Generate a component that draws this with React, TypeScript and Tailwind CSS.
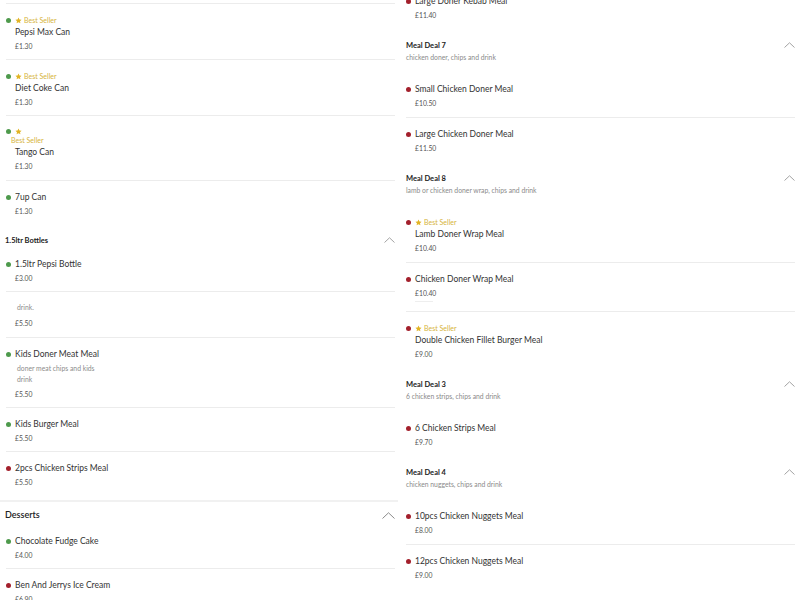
import type { ReactNode } from 'react';

type Dot = 'green' | 'red';

interface Item {
  name?: string;
  price: string;
  dot: Dot;
  best?: 'inline' | 'wrapped';
  desc?: string[];
  last?: boolean;
  stub?: boolean;
}

const font = { fontFamily: 'Lato, "Liberation Sans", sans-serif' };

function DotMark({ dot }: { dot: Dot }) {
  return (
    <span
      className={`inline-block w-[5px] h-[5px] rounded-full shrink-0 ${dot === 'green' ? 'bg-[#4e9a4c]' : 'bg-[#a3202c]'}`}
    />
  );
}

function StarMark() {
  return (
    <svg width="7" height="7" viewBox="0 0 24 24" className="shrink-0">
      <path
        d="M12 1.5l3.2 6.9 7.3.8-5.4 5 1.5 7.3L12 17.8l-6.6 3.7 1.5-7.3-5.4-5 7.3-.8z"
        fill="#e2b424"
      />
    </svg>
  );
}

function Chevron({ big }: { big?: boolean }) {
  return big ? (
    <svg width="13" height="7" viewBox="0 0 13 7">
      <polyline points="0.5,6.5 6.5,0.8 12.5,6.5" fill="none" stroke="#8a8a8a" strokeWidth="1" />
    </svg>
  ) : (
    <svg width="11" height="6" viewBox="0 0 11 6">
      <polyline points="0.5,5.5 5.5,0.8 10.5,5.5" fill="none" stroke="#9a9a9a" strokeWidth="0.9" />
    </svg>
  );
}

// left column rows are a pixel shorter than the right column ones
function MenuItem({ item, tight }: { item: Item; tight?: boolean }) {
  const nameCls = 'text-[8.5px] leading-[12px] text-[#333]';
  let top: ReactNode = null;
  if (item.best === 'inline') {
    top = (
      <>
        <div className="flex items-center h-[12px]">
          <DotMark dot={item.dot} />
          <span className="ml-[4px]">
            <StarMark />
          </span>
          <span className="ml-[2px] text-[7px] text-[#d6b43c]">Best Seller</span>
        </div>
        <div className={`pl-[9px] ${nameCls}`}>{item.name}</div>
      </>
    );
  } else if (item.best === 'wrapped') {
    top = (
      <>
        <div className="flex items-center gap-[4px] h-[10px]">
          <DotMark dot={item.dot} />
          <StarMark />
        </div>
        <div className="pl-[5px] text-[7px] leading-[8px] text-[#d6b43c]">Best Seller</div>
        <div className={`mt-[2px] pl-[9px] ${nameCls}`}>{item.name}</div>
      </>
    );
  } else if (item.name) {
    top = (
      <div className="flex items-center gap-[4px]">
        <DotMark dot={item.dot} />
        <span className={nameCls}>{item.name}</span>
      </div>
    );
  }

  const pb = item.best === 'wrapped' || !item.name ? 'pb-[9px]' : tight ? 'pb-[8px]' : 'pb-[9px]';

  return (
    <div className={`pt-[10px] ${pb} ${item.last ? '' : 'border-b border-[#ececec]'}`}>
      {top}
      {item.desc && (
        <div className={`${item.name ? 'mt-[3px]' : ''} pl-[11px] text-[6.8px] leading-[11px] text-[#8c8c8c]`}>
          {item.desc.map((d) => (
            <div key={d}>{d}</div>
          ))}
        </div>
      )}
      <div
        className={`${item.desc ? (item.name ? 'mt-[4px]' : 'mt-[5px]') : 'mt-[3px]'} pl-[9px] text-[6.8px] leading-[10px] text-[#555]`}
      >
        {item.price}
      </div>
      {item.stub && <div className="mt-[3px] ml-[9px] w-[18px] h-px bg-[#eeeeee]" />}
    </div>
  );
}

function SubHeader({ title, desc }: { title: string; desc?: string }) {
  return (
    <div className="flex items-start justify-between pt-[12px] pb-[11px]">
      <div>
        <div className="text-[7.5px] leading-[10px] font-bold text-[#222]">{title}</div>
        {desc && <div className="mt-px text-[6.8px] leading-[10px] text-[#8a8a8a]">{desc}</div>}
      </div>
      <div className="pt-[1px]">
        <Chevron />
      </div>
    </div>
  );
}

const drinks: Item[] = [
  { name: 'Pepsi Max Can', price: '£1.30', dot: 'green', best: 'inline' },
  { name: 'Diet Coke Can', price: '£1.30', dot: 'green', best: 'inline' },
  { name: 'Tango Can', price: '£1.30', dot: 'green', best: 'wrapped' },
  { name: '7up Can', price: '£1.30', dot: 'green', last: true },
];

const bottles: Item[] = [
  { name: '1.5ltr Pepsi Bottle', price: '£3.00', dot: 'green' },
  { price: '£5.50', dot: 'green', desc: ['drink.'] },
  { name: 'Kids Doner Meat Meal', price: '£5.50', dot: 'green', desc: ['doner meat chips and kids', 'drink'] },
  { name: 'Kids Burger Meal', price: '£5.50', dot: 'green' },
  { name: '2pcs Chicken Strips Meal', price: '£5.50', dot: 'red', last: true },
];

const desserts: Item[] = [
  { name: 'Chocolate Fudge Cake', price: '£4.00', dot: 'green' },
  { name: 'Ben And Jerrys Ice Cream', price: '£6.90', dot: 'red' },
];

interface Section {
  title: string;
  desc: string;
  items: Item[];
}

const mealDeals: Section[] = [
  {
    title: 'Meal Deal 7',
    desc: 'chicken doner, chips and drink',
    items: [
      { name: 'Small Chicken Doner Meal', price: '£10.50', dot: 'red' },
      { name: 'Large Chicken Doner Meal', price: '£11.50', dot: 'red', last: true },
    ],
  },
  {
    title: 'Meal Deal 8',
    desc: 'lamb or chicken doner wrap, chips and drink',
    items: [
      { name: 'Lamb Doner Wrap Meal', price: '£10.40', dot: 'red', best: 'inline' },
      { name: 'Chicken Doner Wrap Meal', price: '£10.40', dot: 'red', stub: true },
      { name: 'Double Chicken Fillet Burger Meal', price: '£9.00', dot: 'red', best: 'inline', last: true },
    ],
  },
  {
    title: 'Meal Deal 3',
    desc: '6 chicken strips, chips and drink',
    items: [{ name: '6 Chicken Strips Meal', price: '£9.70', dot: 'red', last: true }],
  },
  {
    title: 'Meal Deal 4',
    desc: 'chicken nuggets, chips and drink',
    items: [
      { name: '10pcs Chicken Nuggets Meal', price: '£8.00', dot: 'red' },
      { name: '12pcs Chicken Nuggets Meal', price: '£9.00', dot: 'red', last: true },
    ],
  },
  {
    title: 'Meal Deal 5',
    desc: 'chicken fillet burger, chips and drink',
    items: [],
  },
];

export default function App() {
  return (
    <div className="w-[800px] h-[600px] overflow-hidden bg-white flex" style={font}>
      {/* left column */}
      <div className="w-[398px] shrink-0 pl-[6px] pr-[3px] -mt-[41px]">
        <div className="border-b border-[#ececec] h-[45px]" />
        {drinks.map((it) => (
          <MenuItem key={it.name} item={it} tight />
        ))}
        <div className="flex items-start justify-between pt-[12px] pb-[2px]">
          <div className="-ml-px text-[7.5px] leading-[10px] font-bold text-[#222]">1.5ltr Bottles</div>
          <div className="pt-[1px]">
            <Chevron />
          </div>
        </div>
        {bottles.map((it, i) => (
          <MenuItem key={i} item={it} tight />
        ))}
        <div className="-ml-[6px] -mr-[3px] mt-[5px] h-[2px] bg-[#f1f1f1]" />
        <div className="flex items-center justify-between pt-[7px] pb-[4px]">
          <div className="text-[9px] leading-[12px] font-semibold text-[#222] -ml-px">Desserts</div>
          <Chevron big />
        </div>
        {desserts.map((it) => (
          <MenuItem key={it.name} item={it} tight />
        ))}
      </div>

      {/* right column */}
      <div className="flex-1 pl-[8px] pr-[5px] -mt-[15px]">
        <MenuItem item={{ name: 'Large Doner Kebab Meal', price: '£11.40', dot: 'red', last: true }} />
        {mealDeals.map((s) => (
          <div key={s.title}>
            <SubHeader title={s.title} desc={s.desc} />
            {s.items.map((it) => (
              <MenuItem key={it.name} item={it} />
            ))}
          </div>
        ))}
      </div>
    </div>
  );
}
